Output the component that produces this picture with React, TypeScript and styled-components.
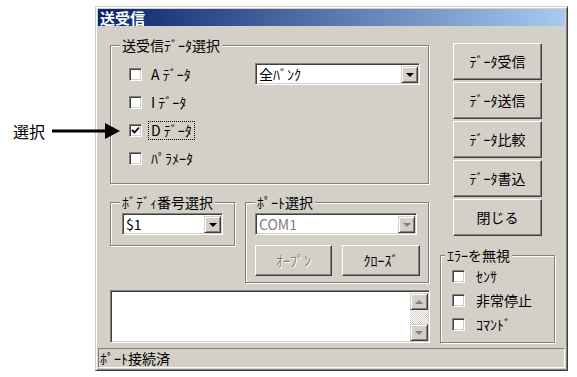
import React from "react";
import styled, { createGlobalStyle, css } from "styled-components";

const GlobalStyle = createGlobalStyle`
  html, body {
    margin: 0;
    padding: 0;
    background: #ffffff;
  }
  body {
    font-family: "Noto Sans CJK JP", "Noto Sans", sans-serif;
    color: #000;
  }
`;

const ui = css`
  font-family: "Noto Sans CJK JP", "Noto Sans", sans-serif;
  font-size: 14px;
  line-height: 15px;
`;

const Page = styled.div`
  position: relative;
  width: 577px;
  height: 377px;
  box-sizing: border-box;
  padding: 6px 0 0 95px;
`;

/* annotation outside the dialog */
const Callout = styled.div`
  position: absolute;
  left: 13px;
  top: 122px;
  display: flex;
  align-items: center;
  gap: 5px;
`;

const CalloutText = styled.span`
  font-family: "Noto Sans CJK JP", sans-serif;
  font-size: 16px;
  line-height: 18px;
`;

const Window = styled.div`
  width: 473px;
  height: 365px;
  box-sizing: border-box;
  background: #d4d0c8;
  border: 1px solid;
  border-color: #d4d0c8 #404040 #404040 #d4d0c8;
  box-shadow: inset 1px 1px 0 #fff, inset -1px -1px 0 #808080;
  padding: 2px;
  display: flex;
  flex-direction: column;
  ${ui};
`;

const TitleBar = styled.div`
  height: 17px;
  background: linear-gradient(to right, #0a246a, #a6caf0);
  color: #fff;
  font-weight: bold;
  font-size: 15px;
  line-height: 17px;
  padding-left: 2px;
`;

const Body = styled.div`
  height: 322px;
  box-sizing: border-box;
  display: flex;
  gap: 10px;
  padding: 12px 10px 0 12px;
`;

const LeftCol = styled.div`
  width: 320px;
  display: flex;
  flex-direction: column;
`;

const RightCol = styled.div`
  width: 115px;
  display: flex;
  flex-direction: column;
  padding-top: 5px;
`;

const Group = styled.fieldset<{ $w: number; $h: number }>`
  width: ${(p) => p.$w}px;
  height: ${(p) => p.$h}px;
  box-sizing: border-box;
  margin: 0;
  padding: 0;
  min-inline-size: 0;
  border: 1px solid #808080;
  box-shadow: 1px 1px 0 #fff, inset 1px 1px 0 #fff;
`;

const Legend = styled.legend<{ $ml?: number }>`
  ${ui};
  margin-left: ${(p) => p.$ml ?? 9}px;
  padding: 0 2px;
  background: #d4d0c8;
`;

const DataGrid = styled.div`
  display: grid;
  grid-template-columns: 126px 165px;
  padding: 7px 0 0 18px;
`;

const CheckList = styled.div<{ $row: number }>`
  display: flex;
  flex-direction: column;
  & > * {
    height: ${(p) => p.$row}px;
  }
`;

const CheckRow = styled.div<{ $gap: number }>`
  display: flex;
  align-items: center;
  gap: ${(p) => p.$gap}px;
`;

const Box = styled.span`
  width: 13px;
  height: 13px;
  box-sizing: border-box;
  background: #fff;
  border: 1px solid;
  border-color: #808080 #fff #fff #808080;
  box-shadow: inset 1px 1px 0 #404040, inset -1px -1px 0 #d4d0c8;
  display: flex;
  align-items: center;
  justify-content: center;
  flex: none;
`;

const CheckLabel = styled.span<{ $focus?: boolean }>`
  ${ui};
  padding: 1px 2px;
  margin-left: -3px;
  outline: ${(p) => (p.$focus ? "1px dotted #000" : "none")};
  white-space: pre;
`;

const Combo = styled.div<{ $w: number }>`
  width: ${(p) => p.$w}px;
  height: 22px;
  box-sizing: border-box;
  background: #fff;
  border: 1px solid;
  border-color: #808080 #fff #fff #808080;
  box-shadow: inset 1px 1px 0 #404040, inset -1px -1px 0 #d4d0c8;
  padding: 2px 1px 1px 2px;
  display: flex;
  align-items: stretch;
`;

const ComboText = styled.span<{ $disabled?: boolean }>`
  ${ui};
  flex: 1;
  padding-left: 1px;
  line-height: 17px;
  color: ${(p) => (p.$disabled ? "#808080" : "#000")};
`;

const DropButton = styled.span`
  width: 17px;
  box-sizing: border-box;
  background: #d4d0c8;
  border: 1px solid;
  border-color: #d4d0c8 #404040 #404040 #d4d0c8;
  box-shadow: inset 1px 1px 0 #fff, inset -1px -1px 0 #808080;
  display: flex;
  align-items: center;
  justify-content: center;
`;

const Tri = styled.span<{ $up?: boolean; $grey?: boolean }>`
  width: 0;
  height: 0;
  border-left: 4px solid transparent;
  border-right: 4px solid transparent;
  ${(p) =>
    p.$up
      ? `border-bottom: 4px solid ${p.$grey ? "#808080" : "#000"};`
      : `border-top: 4px solid ${p.$grey ? "#808080" : "#000"};`}
`;

const Button = styled.button<{ $w: number; $h: number; $disabled?: boolean }>`
  ${ui};
  width: ${(p) => p.$w}px;
  height: ${(p) => p.$h}px;
  box-sizing: border-box;
  margin: 0;
  padding: 0;
  background: #d4d0c8;
  border: 1px solid;
  border-color: #fff #404040 #404040 #fff;
  box-shadow: inset -1px -1px 0 #808080;
  color: ${(p) => (p.$disabled ? "#808080" : "#000")};
  text-shadow: ${(p) => (p.$disabled ? "1px 1px 0 #fff" : "none")};
`;

const ButtonStack = styled.div`
  display: flex;
  flex-direction: column;
  gap: 2px;
  padding-left: 13px;
`;

const LowerRow = styled.div`
  display: flex;
  gap: 10px;
  margin-top: 11px;
  align-items: flex-start;
`;

const GroupInner = styled.div<{ $pl: number; $pt: number }>`
  padding: ${(p) => p.$pt}px 0 0 ${(p) => p.$pl}px;
`;

const PortButtons = styled.div`
  display: flex;
  gap: 10px;
  margin-top: 10px;
`;

const TextBox = styled.div`
  margin-top: 7px;
  width: 320px;
  height: 53px;
  box-sizing: border-box;
  background: #fff;
  border: 1px solid;
  border-color: #808080 #fff #fff #808080;
  box-shadow: inset 1px 1px 0 #404040, inset -1px -1px 0 #d4d0c8;
  padding: 2px 1px 1px 2px;
  display: flex;
  justify-content: flex-end;
`;

const ScrollBar = styled.div`
  width: 18px;
  display: flex;
  flex-direction: column;
`;

const ScrollBtn = styled(DropButton)`
  width: 18px;
  height: 17px;
  flex: none;
`;

const ScrollTrack = styled.div`
  flex: 1;
  background-color: #d4d0c8;
  background-image: repeating-conic-gradient(#fff 0 25%, #d4d0c8 0 50%);
  background-size: 2px 2px;
`;

const ErrorGroupWrap = styled.div`
  margin-top: 12px;
`;

const StatusBar = styled.div`
  ${ui};
  height: 20px;
  box-sizing: border-box;
  border: 1px solid;
  border-color: #808080 #fff #fff #808080;
  padding: 1px 0 0 1px;
  line-height: 17px;
`;

const Check = ({ checked }: { checked?: boolean }) => (
  <Box>
    {checked && (
      <svg width="9" height="9" viewBox="0 0 9 9">
        <path d="M1 4 L3.5 6.5 L8 1.5" fill="none" stroke="#000" strokeWidth="1.8" />
      </svg>
    )}
  </Box>
);

const dataChecks = [
  { label: "A ﾃﾞｰﾀ" },
  { label: "I ﾃﾞｰﾀ" },
  { label: "D ﾃﾞｰﾀ", checked: true, focus: true },
  { label: "ﾊﾟﾗﾒｰﾀ" },
];

const sideButtons = ["ﾃﾞｰﾀ受信", "ﾃﾞｰﾀ送信", "ﾃﾞｰﾀ比較", "ﾃﾞｰﾀ書込", "閉じる"];

const errorChecks = ["ｾﾝｻ", "非常停止", "ｺﾏﾝﾄﾞ"];

const App = () => {
  return (
    <Page>
      <GlobalStyle />
      <Callout>
        <CalloutText>選択</CalloutText>
        <svg width="70" height="18" viewBox="0 0 70 18">
          <line x1="2" y1="9" x2="58" y2="9" stroke="#000" strokeWidth="3" />
          <polygon points="55,1 70,9 55,17" fill="#000" />
        </svg>
      </Callout>

      <Window>
        <TitleBar>送受信</TitleBar>
        <Body>
          <LeftCol>
            <Group $w={319} $h={146}>
              <Legend>送受信ﾃﾞｰﾀ選択</Legend>
              <DataGrid>
                <CheckList $row={28}>
                  {dataChecks.map((c) => (
                    <CheckRow key={c.label} $gap={10}>
                      <Check checked={c.checked} />
                      <CheckLabel $focus={c.focus}>{c.label}</CheckLabel>
                    </CheckRow>
                  ))}
                </CheckList>
                <div style={{ paddingTop: 3 }}>
                  <Combo $w={165}>
                    <ComboText>全ﾊﾞﾝｸ</ComboText>
                    <DropButton>
                      <Tri />
                    </DropButton>
                  </Combo>
                </div>
              </DataGrid>
            </Group>

            <LowerRow>
              <Group $w={125} $h={51}>
                <Legend>ﾎﾞﾃﾞｨ番号選択</Legend>
                <GroupInner $pl={11} $pt={3}>
                  <Combo $w={101}>
                    <ComboText>$1</ComboText>
                    <DropButton>
                      <Tri />
                    </DropButton>
                  </Combo>
                </GroupInner>
              </Group>

              <Group $w={184} $h={88}>
                <Legend>ﾎﾟｰﾄ選択</Legend>
                <GroupInner $pl={9} $pt={3}>
                  <Combo $w={162}>
                    <ComboText $disabled>COM1</ComboText>
                    <DropButton>
                      <Tri $grey />
                    </DropButton>
                  </Combo>
                  <PortButtons>
                    <Button $w={77} $h={31} $disabled>
                      ｵｰﾌﾟﾝ
                    </Button>
                    <Button $w={78} $h={31}>
                      ｸﾛｰｽﾞ
                    </Button>
                  </PortButtons>
                </GroupInner>
              </Group>
            </LowerRow>

            <TextBox>
              <ScrollBar>
                <ScrollBtn>
                  <Tri $up $grey />
                </ScrollBtn>
                <ScrollTrack />
                <ScrollBtn>
                  <Tri $grey />
                </ScrollBtn>
              </ScrollBar>
            </TextBox>
          </LeftCol>

          <RightCol>
            <ButtonStack>
              {sideButtons.map((b) => (
                <Button key={b} $w={89} $h={37}>
                  {b}
                </Button>
              ))}
            </ButtonStack>

            <ErrorGroupWrap>
              <Group $w={115} $h={95}>
                <Legend $ml={4}>ｴﾗｰを無視</Legend>
                <GroupInner $pl={11} $pt={1}>
                  <CheckList $row={24}>
                    {errorChecks.map((c) => (
                      <CheckRow key={c} $gap={12}>
                        <Check />
                        <CheckLabel>{c}</CheckLabel>
                      </CheckRow>
                    ))}
                  </CheckList>
                </GroupInner>
              </Group>
            </ErrorGroupWrap>
          </RightCol>
        </Body>
        <StatusBar>ﾎﾟｰﾄ接続済</StatusBar>
      </Window>
    </Page>
  );
};

export default App;
